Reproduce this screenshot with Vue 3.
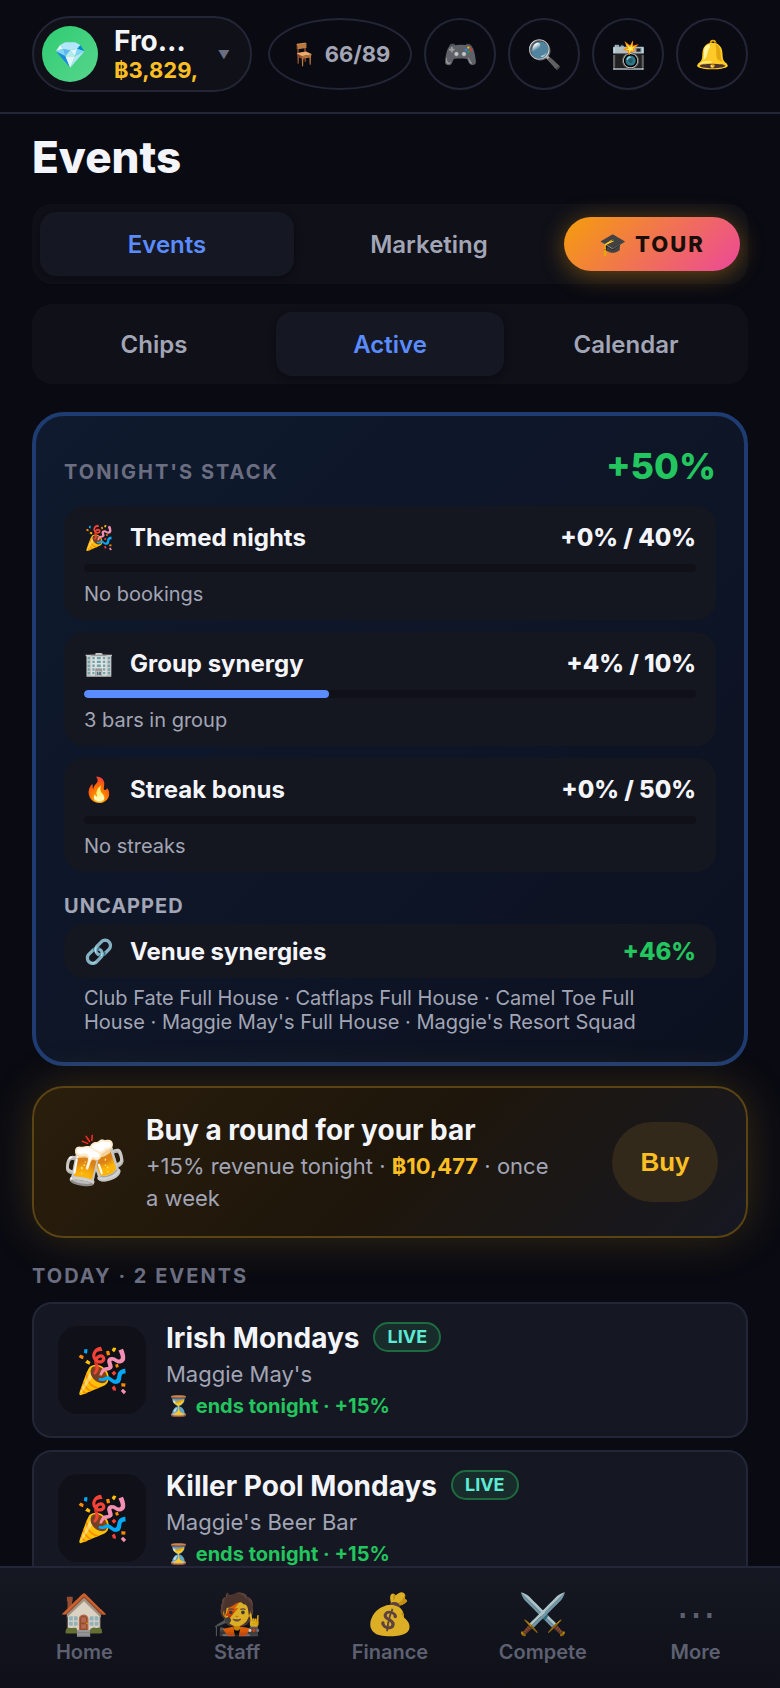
<script setup>
import { ref } from 'vue'

const tools = [
  { icon: '🎮', label: 'Games' },
  { icon: '🔍', label: 'Search' },
  { icon: '📸', label: 'Snapshot' },
  { icon: '🔔', label: 'Notifications' }
]

const section = ref('Events')
const sections = ['Events', 'Marketing']
const view = ref('Active')
const views = ['Chips', 'Active', 'Calendar']

const bonuses = [
  { icon: '🎉', name: 'Themed nights', current: 0, cap: 40, note: 'No bookings' },
  { icon: '🏢', name: 'Group synergy', current: 4, cap: 10, note: '3 bars in group' },
  { icon: '🔥', name: 'Streak bonus', current: 0, cap: 50, note: 'No streaks' }
]

const events = [
  { icon: '🎉', name: 'Irish Mondays', venue: "Maggie May's", status: '⏳ ends tonight · +15%' },
  { icon: '🎉', name: 'Killer Pool Mondays', venue: "Maggie's Beer Bar", status: '⏳ ends tonight · +15%' }
]

const links = [
  { icon: '🏠', label: 'Home' },
  { icon: '🧑‍🎤', label: 'Staff' },
  { icon: '💰', label: 'Finance' },
  { icon: '⚔️', label: 'Compete' },
  { icon: '⋯', label: 'More' }
]
</script>

<template>
  <div class="shell">
    <header class="topbar">
      <button class="profile" type="button">
        <span class="avatar">💎</span>
        <span class="who">
          <span class="who-name">Fro…</span>
          <span class="who-cash">฿3,829,</span>
        </span>
        <span class="caret">▼</span>
      </button>
      <div class="tools">
        <button class="seats" type="button"><span class="seat-icon">🪑</span>66/89</button>
        <button v-for="t in tools" :key="t.label" class="tool" type="button" :aria-label="t.label">{{ t.icon }}</button>
      </div>
    </header>

    <main class="content">
      <h1>Events</h1>

      <div class="tabs">
        <button
          v-for="s in sections"
          :key="s"
          type="button"
          class="tab"
          :class="{ active: s === section }"
          @click="section = s"
        >{{ s }}</button>
        <button class="tour" type="button">🎓 TOUR</button>
      </div>

      <div class="tabs">
        <button
          v-for="v in views"
          :key="v"
          type="button"
          class="tab"
          :class="{ active: v === view }"
          @click="view = v"
        >{{ v }}</button>
      </div>

      <section class="stack">
        <div class="stack-head">
          <h2 class="overline">TONIGHT'S STACK</h2>
          <strong class="total">+50%</strong>
        </div>
        <div class="rows">
          <div v-for="b in bonuses" :key="b.name" class="row">
            <div class="line">
              <span class="row-icon">{{ b.icon }}</span>
              <span class="row-name">{{ b.name }}</span>
              <span class="row-value">+{{ b.current }}% / {{ b.cap }}%</span>
            </div>
            <div class="track"><div class="fill" :style="{ width: (b.current / b.cap) * 100 + '%' }"></div></div>
            <div class="note">{{ b.note }}</div>
          </div>
        </div>
        <h3 class="overline light">UNCAPPED</h3>
        <div class="row slim">
          <div class="line">
            <span class="row-icon">🔗</span>
            <span class="row-name">Venue synergies</span>
            <span class="row-value gain">+46%</span>
          </div>
        </div>
        <p class="synergies">Club Fate Full House · Catflaps Full House · Camel Toe Full House · Maggie May's Full House · Maggie's Resort Squad</p>
      </section>

      <section class="promo">
        <span class="promo-icon">🍻</span>
        <div class="promo-text">
          <h2>Buy a round for your bar</h2>
          <p>+15% revenue tonight · <b>฿10,477</b> · once a&nbsp;week</p>
        </div>
        <button class="buy" type="button">Buy</button>
      </section>

      <h2 class="overline today">TODAY · 2 EVENTS</h2>
      <div class="events">
        <article v-for="e in events" :key="e.name" class="event">
          <span class="event-icon">{{ e.icon }}</span>
          <div class="event-text">
            <div class="event-head">
              <h3>{{ e.name }}</h3>
              <span class="live">LIVE</span>
            </div>
            <p class="venue">{{ e.venue }}</p>
            <p class="status">{{ e.status }}</p>
          </div>
        </article>
      </div>
    </main>

    <nav class="bottom">
      <a v-for="l in links" :key="l.label" href="#">
        <span class="nav-icon">{{ l.icon }}</span>
        <span>{{ l.label }}</span>
      </a>
    </nav>
  </div>
</template>

<style>
body {
  background: #090a12;
}
</style>

<style scoped>
* {
  box-sizing: border-box;
}

h1, h2, h3, p {
  margin: 0;
}

button {
  font: inherit;
  color: inherit;
  padding: 0;
  border: 0;
  background: none;
  cursor: pointer;
}

.shell {
  display: flex;
  flex-direction: column;
  height: 100vh;
  overflow: hidden;
  font-family: Inter, "Noto Sans", sans-serif;
  color: #f4f5fa;
}

/* Top bar */
.topbar {
  flex: none;
  display: flex;
  align-items: center;
  justify-content: space-between;
  gap: 16px;
  padding: 16px 32px 20px;
  border-bottom: 2px solid #232636;
}

.profile {
  flex: 1;
  min-width: 0;
  display: flex;
  align-items: center;
  height: 76px;
  padding: 0 20px 0 8px;
  border: 2px solid #232636;
  border-radius: 38px;
  background: #0f1018;
  text-align: left;
}

.avatar {
  flex: none;
  display: grid;
  place-items: center;
  width: 56px;
  height: 56px;
  border-radius: 50%;
  background: linear-gradient(135deg, #2ecc71, #58d68d);
  font-size: 26px;
}

.who {
  flex: 1;
  min-width: 0;
  margin-left: 16px;
  overflow: hidden;
  white-space: nowrap;
}

.who-name,
.who-cash {
  display: block;
}

.who-name {
  font-size: 28px;
  font-weight: 700;
  line-height: 32px;
}

.who-cash {
  font-size: 22px;
  font-weight: 700;
  line-height: 26px;
  color: #fbbf24;
}

.caret {
  margin-left: 12px;
  font-size: 12px;
  color: #6b6e80;
}

.tools {
  display: flex;
  gap: 12px;
}

.seats {
  display: flex;
  align-items: center;
  justify-content: center;
  gap: 8px;
  width: 144px;
  height: 72px;
  border: 2px solid #232636;
  border-radius: 50%;
  font-size: 22px;
  font-weight: 700;
  color: #a2a5b5;
}

.tool {
  width: 72px;
  height: 72px;
  border: 2px solid #232636;
  border-radius: 50%;
  font-size: 28px;
}

/* Page */
.content {
  flex: 1;
  min-height: 0;
  overflow-y: auto;
  scrollbar-width: none;
  padding: 16px 32px 24px;
}

h1 {
  margin-bottom: 20px;
  font-size: 44px;
  font-weight: 800;
  line-height: 54px;
}

.tabs {
  display: flex;
  align-items: center;
  gap: 8px;
  margin-bottom: 20px;
  padding: 8px;
  border-radius: 20px;
  background: #0f1018;
}

.tab {
  flex: 1;
  height: 64px;
  border-radius: 16px;
  font-size: 24px;
  font-weight: 600;
  color: #a2a5b5;
}

.tab.active {
  background: #151822;
  color: #5b8cff;
  box-shadow: 0 2px 8px rgba(0, 0, 0, 0.3);
}

.tour {
  width: 176px;
  height: 54px;
  border-radius: 27px;
  background: linear-gradient(135deg, #f59e0b, #ec4899);
  box-shadow: 0 4px 24px rgba(245, 158, 11, 0.4);
  font-size: 22px;
  font-weight: 800;
  letter-spacing: 2px;
  color: #1a0f08;
}

/* Bonus stack */
.stack {
  margin-top: 28px;
  padding: 28px;
  border: 4px solid #1f3c72;
  border-radius: 32px;
  background: linear-gradient(135deg, #0f1a2e, #0c1120);
}

.stack-head {
  display: flex;
  align-items: baseline;
  justify-content: space-between;
}

.overline {
  font-size: 20px;
  font-weight: 700;
  line-height: 24px;
  letter-spacing: 2px;
  color: #6b6e80;
}

.overline.light {
  margin: 22px 0 6px;
  letter-spacing: 1px;
  color: #a2a5b5;
}

.total {
  font-size: 36px;
  font-weight: 800;
  line-height: 44px;
  color: #22c55e;
}

.rows {
  display: grid;
  gap: 12px;
  margin-top: 18px;
}

.row {
  padding: 16px 20px 14px;
  border-radius: 20px;
  background: #151720;
}

.row.slim {
  padding: 12px 20px;
}

.line {
  display: flex;
  align-items: center;
  gap: 16px;
  height: 30px;
  font-size: 24px;
  font-weight: 700;
}

.row-icon {
  display: flex;
  justify-content: center;
  width: 30px;
  font-size: 24px;
}

.row-name {
  flex: 1;
}

.row-value {
  font-weight: 800;
}

.gain {
  color: #22c55e;
}

.track {
  height: 8px;
  margin: 12px 0 10px;
  border-radius: 4px;
  background: #0f1018;
  overflow: hidden;
}

.fill {
  height: 100%;
  border-radius: 4px;
  background: #5b8cff;
}

.note,
.synergies {
  font-size: 20px;
  line-height: 24px;
  color: #a2a5b5;
}

.synergies {
  padding: 8px 20px 0;
}

/* Promo */
.promo {
  display: flex;
  align-items: center;
  gap: 20px;
  margin-top: 20px;
  padding: 22px 28px;
  border: 2px solid #5b4314;
  border-radius: 32px;
  background: linear-gradient(135deg, #2a1e0c, #1e160b 50%, #161822);
  box-shadow: 0 0 48px rgba(251, 191, 36, 0.18);
}

.promo-icon {
  flex: none;
  display: flex;
  justify-content: center;
  width: 64px;
  font-size: 52px;
  line-height: 64px;
}

.promo-text {
  flex: 1;
}

.promo h2 {
  font-size: 28px;
  font-weight: 700;
  line-height: 40px;
}

.promo p {
  font-size: 22px;
  line-height: 32px;
  color: #a2a5b5;
}

.promo b {
  font-weight: 700;
  color: #fbbf24;
}

.buy {
  flex: none;
  width: 106px;
  height: 80px;
  border-radius: 40px;
  background: #33291a;
  font-family: "Liberation Sans", sans-serif;
  font-size: 26px;
  font-weight: 700;
  color: #fbbf24;
}

/* Events */
.today {
  margin: 26px 0 14px;
}

.events {
  display: grid;
  gap: 12px;
}

.event {
  display: flex;
  align-items: center;
  gap: 20px;
  height: 136px;
  padding: 0 24px;
  border: 2px solid #232636;
  border-radius: 20px;
  background: #151822;
}

.event-icon {
  flex: none;
  display: flex;
  align-items: center;
  justify-content: center;
  width: 88px;
  height: 88px;
  border-radius: 20px;
  background: #0f1018;
  font-size: 44px;
}

.event-head {
  display: flex;
  align-items: flex-start;
  gap: 14px;
}

.event h3 {
  font-size: 28px;
  font-weight: 700;
  line-height: 40px;
}

.live {
  height: 30px;
  margin-top: 4px;
  padding: 0 12px;
  border: 2px solid #1d6b3f;
  border-radius: 15px;
  background: #182d2b;
  font-size: 18px;
  font-weight: 700;
  line-height: 26px;
  color: #5eead4;
}

.venue {
  font-size: 22px;
  line-height: 32px;
  color: #a2a5b5;
}

.status {
  font-size: 20px;
  font-weight: 700;
  line-height: 32px;
  color: #22c55e;
}

/* Bottom navigation */
.bottom {
  flex: none;
  display: flex;
  height: 122px;
  padding: 20px 8px 0;
  border-top: 2px solid #232636;
  background: linear-gradient(180deg, #151822, #0f1018);
}

.bottom a {
  flex: 1;
  display: flex;
  flex-direction: column;
  align-items: center;
  font-size: 20px;
  font-weight: 600;
  line-height: 24px;
  color: #6b6e80;
  text-decoration: none;
  opacity: 0.85;
}

.nav-icon {
  font-size: 40px;
  line-height: 52px;
  font-weight: 400;
}
</style>
